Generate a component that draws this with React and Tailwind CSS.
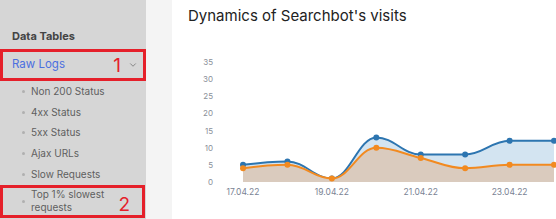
import { ChevronDown } from "lucide-react";

const blue = [5, 6, 1, 13, 8, 8, 12, 12];
const orange = [4, 5, 1, 10, 7, 4, 5, 5];
const subItems = ["Non 200 Status", "4xx Status", "5xx Status", "Ajax URLs", "Slow Requests"];

// chart geometry, in svg coords (svg starts at page x=172, y=32)
const X0 = 71;
const STEP = 44.43;
const BASE = 150;
const UNIT = 3.43;

const pts = (vals) => vals.map((v, i) => [X0 + i * STEP, BASE - v * UNIT]);

// spline smoothing, same idea as highcharts' spline series
function splinePath(p) {
  const s = 1.5;
  const den = s + 1;
  const ctrl = p.map(([x, y], i) => {
    const prev = p[i - 1];
    const next = p[i + 1];
    if (!prev || !next) return { lx: x, ly: y, rx: x, ry: y };
    const lx = (s * x + prev[0]) / den;
    let ly = (s * y + prev[1]) / den;
    const rx = (s * x + next[0]) / den;
    let ry = (s * y + next[1]) / den;
    const corr = ((ry - ly) * (rx - x)) / (rx - lx) + y - ry;
    ly += corr;
    ry += corr;
    if (ly > prev[1] && ly > y) {
      ly = Math.max(prev[1], y);
      ry = 2 * y - ly;
    } else if (ly < prev[1] && ly < y) {
      ly = Math.min(prev[1], y);
      ry = 2 * y - ly;
    }
    if (ry > next[1] && ry > y) {
      ry = Math.max(next[1], y);
      ly = 2 * y - ry;
    } else if (ry < next[1] && ry < y) {
      ry = Math.min(next[1], y);
      ly = 2 * y - ry;
    }
    return { lx, ly, rx, ry };
  });
  let path = `M${p[0][0]},${p[0][1]}`;
  for (let i = 1; i < p.length; i++) {
    const a = ctrl[i - 1];
    const b = ctrl[i];
    path += ` C${a.rx},${a.ry} ${b.lx},${b.ly} ${p[i][0]},${p[i][1]}`;
  }
  return path;
}

function Series({ vals, stroke, fill }) {
  const p = pts(vals);
  const line = splinePath(p);
  const last = p[p.length - 1];
  const area = `${line} L${last[0]},${BASE} L${p[0][0]},${BASE} Z`;
  return (
    <g>
      <path d={area} fill={fill} />
      <path d={line} fill="none" stroke={stroke} strokeWidth="2" />
      {p.map(([x, y], i) => (
        <circle key={i} cx={x} cy={y} r="3" fill={stroke} />
      ))}
    </g>
  );
}

function Chart() {
  const ticks = [0, 5, 10, 15, 20, 25, 30, 35];
  const dates = ["17.04.22", "19.04.22", "21.04.22", "23.04.22"];
  return (
    <svg width="384" height="187" className="block">
      {ticks.map((t) => (
        <text key={t} x="41" y={BASE - t * UNIT + 3} textAnchor="end" fontSize="8" fill="#8a8f99" fontFamily="Inter, sans-serif">
          {t}
        </text>
      ))}
      <Series vals={blue} stroke="#2d75b0" fill="#d3e4f1" />
      <Series vals={orange} stroke="#f28a20" fill="#dacbbe" />
      {dates.map((d, i) => (
        <text key={d} x={X0 + i * 2 * STEP} y="163" textAnchor="middle" fontSize="8.5" fill="#7a8394" fontFamily="Inter, sans-serif">
          {d}
        </text>
      ))}
    </svg>
  );
}

export default function App() {
  return (
    <div className="flex h-[219px] w-[556px] overflow-hidden font-['Inter',sans-serif]">
      <aside className="w-[146px] shrink-0 bg-[#d6d6d6]">
        <div className="pt-[29px] pl-[12px] text-[11px] font-bold leading-[14px] text-[#444]">Data Tables</div>
        <div className="mt-[6px] flex h-[32px] items-center border-[3px] border-[#e5202a] pl-[9px] pr-[5px]">
          <span className="text-[11.5px] text-[#4b6fe0]">Raw Logs</span>
          <span className="ml-auto text-[19px] leading-none text-[#e5202a]">1</span>
          <ChevronDown size={10} className="ml-[7px] text-[#777]" />
        </div>
        <ul>
          {subItems.map((s) => (
            <li key={s} className="flex h-[20.8px] items-center pl-[22px] text-[10px] text-[#5f5f5f]">
              <span className="mr-[6px] h-[3px] w-[3px] rounded-full bg-[#b0b0b0]" />
              {s}
            </li>
          ))}
        </ul>
        <div className="flex h-[33px] w-[145px] items-center border-[3px] border-[#e5202a] pl-[19px]">
          <span className="mr-[6px] h-[3px] w-[3px] rounded-full bg-[#b0b0b0]" />
          <span className="text-[10px] leading-[13px] text-[#5f5f5f]">
            Top 1% slowest
            <br />
            requests
          </span>
          <span className="ml-auto mr-[12px] mt-[6px] text-[19px] leading-none text-[#e5202a]">2</span>
        </div>
      </aside>
      <div className="w-[26px] shrink-0 bg-[#f4f4f4]" />
      <main className="flex flex-1 flex-col bg-white">
        <h1 className="h-[32px] pl-[16px] pt-[6px] text-[15px] leading-[20px] text-[#222]">Dynamics of Searchbot's visits</h1>
        <Chart />
      </main>
    </div>
  );
}
